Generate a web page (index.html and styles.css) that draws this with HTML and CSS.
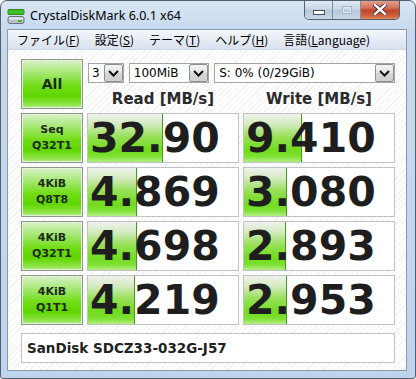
FILE: index.html
```html
<!DOCTYPE html>
<html>
<head>
<meta charset="utf-8">
<link rel="stylesheet" href="styles.css">
</head>
<body>
<div class="window">
  <div class="titlebar">
    <svg class="appicon" width="18" height="16" viewBox="0 0 18 16">
      <rect x="1" y="0.5" width="16" height="5" rx="1" fill="#3fbf2a" stroke="#2b8a1c"/>
      <rect x="1" y="7.5" width="16" height="7" rx="2" fill="#b9bec4" stroke="#6c737b"/>
      <rect x="2" y="8.5" width="14" height="2" fill="#e4e7ea"/>
      <rect x="11" y="11" width="4" height="2" fill="#3fbf2a"/>
    </svg>
    <span class="title">CrystalDiskMark 6.0.1 x64</span>
    <div class="controls">
      <div class="ctl min"><span class="minbar"></span></div>
      <div class="ctl max"><span class="maxbox"></span></div>
      <div class="ctl close">
        <svg width="14" height="11" viewBox="0 0 14 11">
          <path d="M2 1 L12 10 M12 1 L2 10" stroke="#3b2a28" stroke-width="4.2" stroke-linecap="square"/>
          <path d="M2 1 L12 10 M12 1 L2 10" stroke="#ffffff" stroke-width="2.4" stroke-linecap="square"/>
        </svg>
      </div>
    </div>
  </div>
  <div class="client">
    <div class="menubar">
      <span class="mi">ファイル(<u>F</u>)</span>
      <span class="mi">設定(<u>S</u>)</span>
      <span class="mi">テーマ(<u>T</u>)</span>
      <span class="mi">ヘルプ(<u>H</u>)</span>
      <span class="mi">言語(<u>L</u>anguage)</span>
    </div>
    <div class="body">
      <div class="grid">
        <div class="btn all">All</div>
        <div class="topright">
          <div class="selects">
            <div class="sel s1"><span class="stext">3</span><span class="drop"><svg width="11" height="7" viewBox="0 0 11 7"><path d="M1 1 L5.5 5.5 L10 1" fill="none" stroke="#111" stroke-width="2"/></svg></span></div>
            <div class="sel s2"><span class="stext">100MiB</span><span class="drop"><svg width="11" height="7" viewBox="0 0 11 7"><path d="M1 1 L5.5 5.5 L10 1" fill="none" stroke="#111" stroke-width="2"/></svg></span></div>
            <div class="sel s3"><span class="stext">S: 0% (0/29GiB)</span><span class="drop"><svg width="11" height="7" viewBox="0 0 11 7"><path d="M1 1 L5.5 5.5 L10 1" fill="none" stroke="#111" stroke-width="2"/></svg></span></div>
          </div>
          <div class="heads">
            <div class="head">Read [MB/s]</div>
            <div class="head">Write [MB/s]</div>
          </div>
        </div>

        <div class="btn lbl">Seq<br>Q32T1</div>
        <div class="val"><div class="bar" style="width:75px"></div><span class="num">32.90</span></div>
        <div class="val"><div class="bar" style="width:58px"></div><span class="num">9.410</span></div>

        <div class="btn lbl">4KiB<br>Q8T8</div>
        <div class="val"><div class="bar" style="width:49px"></div><span class="num">4.869</span></div>
        <div class="val"><div class="bar" style="width:43px"></div><span class="num">3.080</span></div>

        <div class="btn lbl">4KiB<br>Q32T1</div>
        <div class="val"><div class="bar" style="width:49px"></div><span class="num">4.698</span></div>
        <div class="val"><div class="bar" style="width:42px"></div><span class="num">2.893</span></div>

        <div class="btn lbl">4KiB<br>Q1T1</div>
        <div class="val"><div class="bar" style="width:47px"></div><span class="num">4.219</span></div>
        <div class="val"><div class="bar" style="width:43px"></div><span class="num">2.953</span></div>
      </div>
      <div class="namebox">SanDisk SDCZ33-032G-J57</div>
    </div>
  </div>
</div>
</body>
</html>
```
FILE: styles.css
```css
html, body {
  margin: 0;
  padding: 0;
  background: #ffffff;
}
.window {
  width: 416px;
  height: 379px;
  box-sizing: border-box;
  border: 1px solid #545f6c;
  border-radius: 7px 7px 3px 3px;
  background: linear-gradient(to bottom, #d9e6f4 0px, #c6d9ee 30px, #bfd4ed 100%);
  display: flex;
  flex-direction: column;
  overflow: hidden;
  position: relative;
}
.titlebar {
  height: 28px;
  display: flex;
  align-items: flex-start;
  position: relative;
}
.appicon {
  margin: 8px 0 0 6px;
  flex: none;
}
.title {
  margin: 4px 0 0 5px;
  font-family: "Noto Sans", "DejaVu Sans", sans-serif;
  font-size: 12.5px;
  line-height: 22px;
  color: #000;
}
.controls {
  position: absolute;
  top: -1px;
  right: 15px;
  display: flex;
  border: 1px solid #55616f;
  border-top: none;
  border-radius: 0 0 5px 5px;
  overflow: hidden;
  height: 19px;
}
.ctl {
  display: flex;
  align-items: center;
  justify-content: center;
  height: 19px;
}
.min, .max {
  width: 27px;
  background: linear-gradient(to bottom, #e3ebf4 0%, #ccd9e8 45%, #b7c8dc 55%, #c8d6e6 100%);
  border-right: 1px solid #7d8ea3;
}
.minbar {
  width: 10px;
  height: 3px;
  background: #fff;
  border: 1px solid #46505c;
  margin-top: 5px;
}
.maxbox {
  width: 8px;
  height: 6px;
  border: 1px solid #a9b6c6;
  box-shadow: inset 0 0 0 1px #dfe7f0;
}
.close {
  width: 38px;
  background: linear-gradient(to bottom, #e8a493 0%, #d4735c 40%, #c2452a 55%, #d0633f 85%, #e28a5f 100%);
}
.client {
  flex: 1;
  margin: 0 8px 7px 6px;
  border: 1px solid #8b99ab;
  display: flex;
  flex-direction: column;
  background-color: #ffffff;
  background-image: repeating-linear-gradient(135deg, #ffffff 0px, #ffffff 3px, #f1f1f1 3px, #f1f1f1 4px);
}
.menubar {
  height: 19px;
  display: flex;
  align-items: center;
  gap: 15px;
  padding-left: 9px;
  background: linear-gradient(to bottom, #f4f7fb 0%, #e6ecf5 50%, #d9e1ed 100%);
  border-bottom: 1px solid #d0d8e3;
  font-family: "Noto Sans CJK JP", "Noto Sans", sans-serif;
  font-size: 12px;
  color: #000;
}
.mi u {
  text-decoration: underline;
  text-underline-offset: 1px;
}
.body {
  padding: 9px 10px 0 13px;
}
.grid {
  display: grid;
  grid-template-columns: 62px 152px 152px;
  grid-template-rows: 50px 50px 50px 50px 50px;
  column-gap: 4px;
  row-gap: 4px;
}
.btn {
  box-sizing: border-box;
  border: 1px solid #8d958d;
  box-shadow: inset 0 0 0 1px #e4f3da;
  background: linear-gradient(to bottom, #d8f2c8 0%, #a9e87a 25%, #6fdc12 55%, #5fd600 75%, #8ee446 92%, #b4ec88 100%);
  display: flex;
  align-items: center;
  justify-content: center;
  text-align: center;
  font-family: "DejaVu Sans", sans-serif;
  font-weight: bold;
  color: #1d2a1a;
}
.all {
  font-size: 14px;
}
.lbl {
  font-size: 11px;
  line-height: 16px;
}
.topright {
  grid-column: 2 / 4;
  display: flex;
  flex-direction: column;
}
.selects {
  display: flex;
  gap: 5px;
  margin: 4px 0 0 1px;
  height: 20px;
}
.sel {
  box-sizing: border-box;
  height: 20px;
  border: 1px solid #a4a4a4;
  background: #fff;
  display: flex;
  align-items: center;
  justify-content: space-between;
  font-family: "DejaVu Sans", sans-serif;
  font-size: 12px;
  color: #000;
}
.s1 { width: 36px; }
.s2 { width: 81px; }
.s3 { width: 182px; }
.stext {
  padding-left: 3px;
  white-space: nowrap;
}
.s2 .stext, .s3 .stext { padding-left: 4px; }
.drop {
  box-sizing: border-box;
  width: 19px;
  height: 18px;
  border: 1px solid #8e8f8f;
  border-radius: 2px;
  background: linear-gradient(to bottom, #f2f2f2 0%, #e5e5e5 50%, #d6d6d6 51%, #cfcfcf 100%);
  display: flex;
  align-items: center;
  justify-content: center;
}
.heads {
  display: grid;
  grid-template-columns: 152px 152px;
  column-gap: 4px;
  margin-top: 7px;
}
.head {
  text-align: center;
  font-family: "DejaVu Sans", sans-serif;
  font-weight: bold;
  font-size: 15px;
  line-height: 18px;
  color: #2b2b2b;
}
.val {
  position: relative;
  box-sizing: border-box;
  border: 1px solid #c2c2c2;
  background: #ffffff;
  display: flex;
  align-items: center;
  overflow: hidden;
}
.bar {
  position: absolute;
  left: 0;
  top: 0;
  bottom: 0;
  box-sizing: border-box;
  border-right: 1px solid #3f9a1e;
  background: linear-gradient(to bottom, #f0f2ee 0%, #d2eabd 22%, #96e056 48%, #72dc1e 75%, #7ce030 88%, #b2ee84 100%);
}
.num {
  position: relative;
  padding-left: 2px;
  font-family: "DejaVu Sans", sans-serif;
  font-weight: bold;
  font-size: 41px;
  line-height: 48px;
  color: #1e1e1e;
  white-space: nowrap;
}
.namebox {
  box-sizing: border-box;
  margin-top: 8px;
  width: 374px;
  height: 30px;
  border: 1px solid #c2c2c2;
  background: #ffffff;
  display: flex;
  align-items: center;
  padding-left: 5px;
  font-family: "DejaVu Sans", sans-serif;
  font-weight: bold;
  font-size: 13.5px;
  color: #222;
}
```
